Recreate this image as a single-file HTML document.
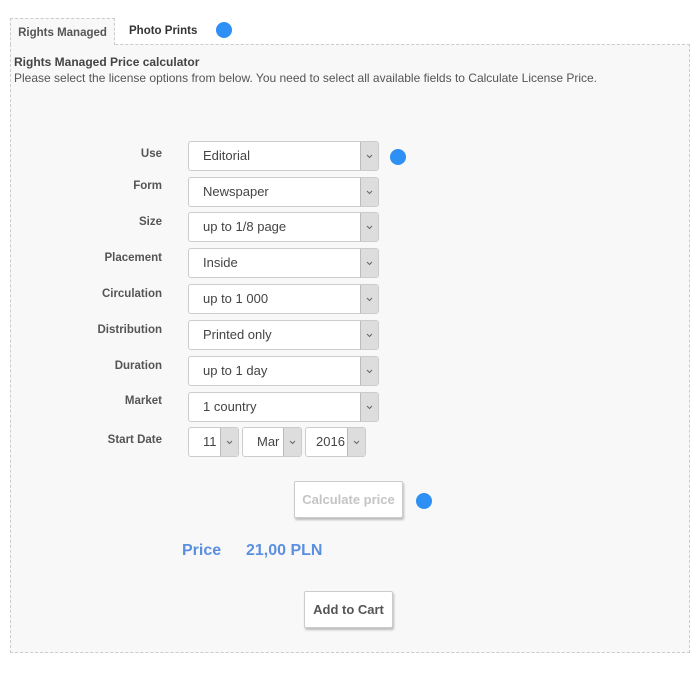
<!DOCTYPE html><html><head><style>
body{margin:0;width:700px;height:684px;background:#fff;font-family:"Liberation Sans",sans-serif;position:relative;overflow:hidden}
.a{position:absolute}
.tab{left:10px;top:18px;width:105px;height:27px;border:1px dashed #ccc;border-bottom:none;background:#f8f8f8;font-size:11.5px;color:#555;text-align:center;line-height:28px;font-weight:bold;box-sizing:border-box;z-index:2}
.panel{left:10px;top:44px;width:680px;height:609px;border:1px dashed #ccc;background:#f8f8f8;box-sizing:border-box}
.dot{width:16px;height:16px;border-radius:50%;background:#2e8ff5}
.lbl{width:120px;left:42px;text-align:right;font-size:11.5px;font-weight:bold;color:#555}
.sel{left:188px;width:191px;height:30px;border:1px solid #ccc;border-radius:3px;background:#fff;box-sizing:border-box;font-size:13px;color:#444;line-height:28px;padding-left:14px}
.sel svg{position:absolute;right:0;top:0;width:17px;height:28px;background:#ddd;border-left:1px solid #bbb}
.btn{background:#fff;border:1px solid #ccc;border-radius:2px;box-shadow:1px 2px 2px #bbb;font-size:13px;font-weight:bold;text-align:center;box-sizing:border-box}
</style></head><body>
<div class="a tab">Rights Managed</div>
<div class="a" style="left:129px;top:25px;font-size:11.5px;font-weight:bold;color:#333">Photo Prints</div>
<div class="a dot" style="left:216px;top:22px"></div>
<div class="a panel"></div>
<div class="a" style="left:14px;top:55px;font-size:12px;font-weight:bold;color:#444">Rights Managed Price calculator</div>
<div class="a" style="left:14px;top:71px;font-size:12px;color:#555">Please select the license options from below. You need to select all available fields to Calculate License Price.</div>

<div class="a lbl" style="top:148px">Use</div><div class="a sel" style="top:141px">Editorial<svg viewBox="0 0 17 28"><path d="M6 13l2.5 2.5L11 13" fill="none" stroke="#666"/></svg></div>
<div class="a dot" style="left:390px;top:149px"></div>
<div class="a lbl" style="top:180px">Form</div><div class="a sel" style="top:177px">Newspaper<svg viewBox="0 0 17 28"><path d="M6 13l2.5 2.5L11 13" fill="none" stroke="#666"/></svg></div>
<div class="a lbl" style="top:216px">Size</div><div class="a sel" style="top:212px">up to 1/8 page<svg viewBox="0 0 17 28"><path d="M6 13l2.5 2.5L11 13" fill="none" stroke="#666"/></svg></div>
<div class="a lbl" style="top:252px">Placement</div><div class="a sel" style="top:248px">Inside<svg viewBox="0 0 17 28"><path d="M6 13l2.5 2.5L11 13" fill="none" stroke="#666"/></svg></div>
<div class="a lbl" style="top:288px">Circulation</div><div class="a sel" style="top:284px">up to 1 000<svg viewBox="0 0 17 28"><path d="M6 13l2.5 2.5L11 13" fill="none" stroke="#666"/></svg></div>
<div class="a lbl" style="top:324px">Distribution</div><div class="a sel" style="top:320px">Printed only<svg viewBox="0 0 17 28"><path d="M6 13l2.5 2.5L11 13" fill="none" stroke="#666"/></svg></div>
<div class="a lbl" style="top:360px">Duration</div><div class="a sel" style="top:356px">up to 1 day<svg viewBox="0 0 17 28"><path d="M6 13l2.5 2.5L11 13" fill="none" stroke="#666"/></svg></div>
<div class="a lbl" style="top:395px">Market</div><div class="a sel" style="top:392px">1 country<svg viewBox="0 0 17 28"><path d="M6 13l2.5 2.5L11 13" fill="none" stroke="#666"/></svg></div>
<div class="a lbl" style="top:434px">Start Date</div>
<div class="a sel" style="top:427px;width:51px">11<svg viewBox="0 0 17 28"><path d="M6 13l2.5 2.5L11 13" fill="none" stroke="#666"/></svg></div>
<div class="a sel" style="top:427px;left:242px;width:60px">Mar<svg viewBox="0 0 17 28"><path d="M6 13l2.5 2.5L11 13" fill="none" stroke="#666"/></svg></div>
<div class="a sel" style="top:427px;left:305px;width:61px;padding-left:10px">2016<svg viewBox="0 0 17 28"><path d="M6 13l2.5 2.5L11 13" fill="none" stroke="#666"/></svg></div>

<div class="a btn" style="left:294px;top:481px;width:109px;height:37px;line-height:35px;color:#c4c4c4">Calculate price</div>
<div class="a dot" style="left:416px;top:493px"></div>
<div class="a" style="left:182px;top:542px;font-size:16px;font-weight:bold;color:#5b8fe0">Price</div>
<div class="a" style="left:246px;top:542px;font-size:16px;font-weight:bold;color:#5b8fe0">21,00 PLN</div>
<div class="a btn" style="left:304px;top:591px;width:89px;height:37px;line-height:36px;color:#555">Add to Cart</div>
</body></html>
